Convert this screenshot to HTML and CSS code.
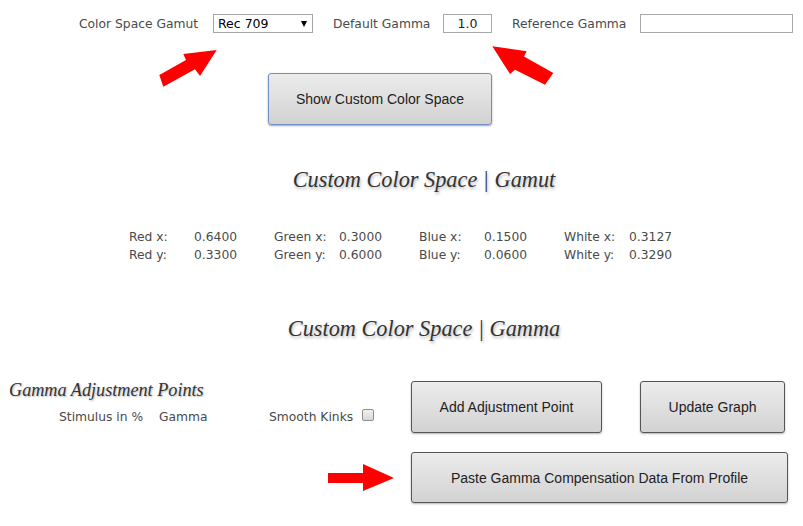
FILE: index.html
```html
<!DOCTYPE html>
<html>
<head>
<meta charset="utf-8">
<link rel="stylesheet" href="styles.css">
</head>
<body>
<div class="page">
  <div class="toolbar">
    <label class="lbl lbl-gamut">Color Space Gamut</label>
    <span class="select-wrap"><select class="select"><option>Rec 709</option></select></span>
    <label class="lbl lbl-default">Default Gamma</label>
    <input class="input input-gamma" type="text" value="1.0">
    <label class="lbl lbl-ref">Reference Gamma</label>
    <input class="input input-ref" type="text" value="">
  </div>

  <div class="center-row">
    <button class="btn btn-show">Show Custom Color Space</button>
  </div>

  <h2 class="section-title title-gamut">Custom Color Space | Gamut</h2>

  <div class="gamut-grid">
    <span class="k">Red x:</span><span class="v">0.6400</span>
    <span class="k">Green x:</span><span class="v">0.3000</span>
    <span class="k">Blue x:</span><span class="v">0.1500</span>
    <span class="k">White x:</span><span class="v">0.3127</span>
    <span class="k">Red y:</span><span class="v">0.3300</span>
    <span class="k">Green y:</span><span class="v">0.6000</span>
    <span class="k">Blue y:</span><span class="v">0.0600</span>
    <span class="k">White y:</span><span class="v">0.3290</span>
  </div>

  <h2 class="section-title title-gamma">Custom Color Space | Gamma</h2>

  <div class="gamma-section">
    <div class="gamma-left">
      <h3 class="sub-title">Gamma Adjustment Points</h3>
      <div class="points-head">
        <span class="col-stim">Stimulus in %</span>
        <span class="col-gamma">Gamma</span>
        <span class="col-smooth">Smooth Kinks</span>
        <span class="checkbox"></span>
      </div>
    </div>
    <div class="gamma-buttons">
      <button class="btn btn-dark">Add Adjustment Point</button>
      <button class="btn btn-dark">Update Graph</button>
      <button class="btn btn-dark btn-wide">Paste Gamma Compensation Data From Profile</button>
    </div>
  </div>

  <svg class="annotations" width="803" height="526" viewBox="0 0 803 526">
    <polygon fill="#ff0000" points="216.7,50 183.3,54 186,60 159.3,75 163.3,86.7 195,69.3 200,76"/>
    <polygon fill="#ff0000" points="492.3,46.3 526.7,51.3 524,56.5 553.3,73 545,84.7 515,69.7 510,74"/>
    <polygon fill="#ff0000" points="328,473 363,473 363,464 394,478 363,491 363,483 328,483"/>
  </svg>
</div>
</body>
</html>
```

FILE: styles.css
```css
html, body {
  margin: 0;
  padding: 0;
  background: #ffffff;
}

.page {
  position: relative;
  width: 803px;
  height: 526px;
  overflow: hidden;
  font-family: "DejaVu Sans", Verdana, sans-serif;
  font-size: 12.3px;
  color: #4a4a4a;
}

.toolbar {
  display: flex;
  align-items: center;
  height: 19px;
  padding: 14px 0 0 79px;
}

.lbl {
  white-space: nowrap;
}

.lbl-gamut { width: 134px; }
.lbl-default { width: 110px; margin-left: 20px; }
.lbl-ref { width: 128px; margin-left: 20px; }

.select-wrap {
  position: relative;
  display: inline-block;
  width: 100px;
  height: 19px;
}

.select-wrap::after {
  content: "";
  position: absolute;
  right: 6px;
  top: 7px;
  border-left: 3.5px solid transparent;
  border-right: 3.5px solid transparent;
  border-top: 6px solid #000;
}

.select {
  appearance: none;
  -webkit-appearance: none;
  box-sizing: border-box;
  width: 100px;
  height: 19px;
  margin: 0;
  padding: 0 0 0 4px;
  border: 1px solid #a6a6a6;
  border-radius: 0;
  background: #fff;
  font-family: "DejaVu Sans", Verdana, sans-serif;
  font-size: 12.5px;
  color: #000;
}

.input {
  box-sizing: border-box;
  height: 19px;
  margin: 0;
  padding: 0;
  border: 1px solid #a9a9a9;
  background: #fff;
  font-family: "DejaVu Sans", Verdana, sans-serif;
  font-size: 12.5px;
  color: #222;
}

.input-gamma {
  width: 49px;
  text-align: center;
}

.input-ref {
  width: 153px;
}

.center-row {
  display: flex;
  justify-content: center;
  margin-top: 40px;
  width: 760px;
}

.btn {
  box-sizing: border-box;
  margin: 0;
  padding: 0;
  border-radius: 3px;
  background: linear-gradient(#ececec, #d2d2d2);
  font-family: "Liberation Sans", Arial, sans-serif;
  font-size: 14px;
  color: #222;
  cursor: pointer;
}

.btn-show {
  width: 224px;
  height: 52px;
  border: 1px solid #6f8fc7;
  box-shadow: 0 1px 2px rgba(0, 0, 0, 0.35);
}

.section-title {
  margin: 0;
  text-align: center;
  font-family: "Liberation Serif", "Times New Roman", serif;
  font-style: italic;
  font-weight: normal;
  font-size: 22.3px;
  line-height: 30px;
  color: #333;
  text-shadow: 1px 2px 3px rgba(0, 0, 0, 0.3);
  padding-left: 45px;
}

.title-gamut {
  margin-top: 40px;
}

.title-gamma {
  margin-top: 50px;
}

.gamut-grid {
  display: grid;
  grid-template-columns: repeat(4, 65px 80px);
  grid-auto-rows: 18px;
  line-height: 18px;
  margin: 33px 0 0 129px;
  color: #4a4a4a;
}

.gamma-section {
  display: flex;
  margin-top: 37px;
}

.gamma-left {
  width: 402px;
  padding-left: 9px;
}

.sub-title {
  margin: 0;
  font-family: "Liberation Serif", "Times New Roman", serif;
  font-style: italic;
  font-weight: normal;
  font-size: 18.2px;
  line-height: 18px;
  color: #333;
  text-shadow: 1px 1px 2px rgba(0, 0, 0, 0.3);
}

.points-head {
  display: flex;
  align-items: center;
  height: 18px;
  margin-top: 9px;
  padding-left: 50px;
  white-space: nowrap;
}

.col-stim { width: 100px; }
.col-gamma { width: 110px; }
.col-smooth { width: 93px; }

.checkbox {
  display: inline-block;
  box-sizing: border-box;
  width: 12px;
  height: 12px;
  margin-top: -4px;
  border: 1px solid #8f8f8f;
  border-radius: 2px;
  background: linear-gradient(#f0f0f0, #d8d8d8);
}

.gamma-buttons {
  display: grid;
  grid-template-columns: 191px 145px;
  grid-template-rows: 52px 51px;
  column-gap: 38px;
  row-gap: 19px;
}

.btn-dark {
  height: 100%;
  border: 1px solid #555;
  box-shadow: 0 1px 2px rgba(0, 0, 0, 0.3);
}

.btn-wide {
  grid-column: 1 / 3;
  width: 377px;
}

.annotations {
  position: absolute;
  left: 0;
  top: 0;
  pointer-events: none;
}
```
